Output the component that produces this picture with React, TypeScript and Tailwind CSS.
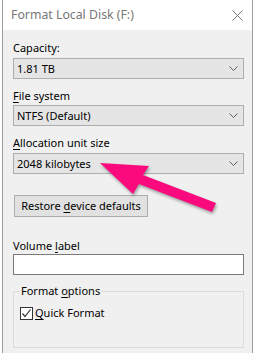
import React from "react";

const FONT = { fontFamily: '"Segoe UI", "Noto Sans", "Open Sans", sans-serif' };

function Chevron() {
  return (
    <svg width="9" height="5" viewBox="0 0 9 5" className="shrink-0">
      <path d="M0.5 0.5 L4.5 4.5 L8.5 0.5" fill="none" stroke="#606060" strokeWidth="1" />
    </svg>
  );
}

function Combo({ value }: { value: string }) {
  return (
    <div className="h-[21px] border border-[#adadad] bg-[#e5e5e5] flex items-center pl-[3px] pr-[5px]">
      <span className="flex-1 leading-4">{value}</span>
      <Chevron />
    </div>
  );
}

export default function App() {
  return (
    <div className="relative w-[254px] h-[353px] flex bg-white overflow-hidden text-[11px] text-black" style={FONT}>
      <div className="w-[2px] bg-white" />
      <div className="w-[251px] flex flex-col border-x border-[#9c9c9c]">
        {/* title bar */}
        <div className="h-[30px] bg-white flex items-center pl-[8px] pr-[9px]">
          <span className="flex-1 text-[#777777] text-[12.3px] leading-4">Format Local Disk (F:)</span>
          <svg width="11" height="11" viewBox="0 0 11 11">
            <path d="M0.5 0.5 L10.5 10.5 M10.5 0.5 L0.5 10.5" stroke="#7a7a7a" strokeWidth="1" />
          </svg>
        </div>

        <div className="flex-1 bg-[#f0f0f0] pl-[10px] pr-[8px] flex flex-col">
          <div className="mt-[10px] leading-4">Capacity:</div>
          <div className="mt-[2px]">
            <Combo value="1.81 TB" />
          </div>

          <div className="mt-[9px] leading-4">
            <span className="underline underline-offset-2">F</span>ile system
          </div>
          <div className="mt-[1px]">
            <Combo value="NTFS (Default)" />
          </div>

          <div className="mt-[9px] leading-4">
            <span className="underline underline-offset-2">A</span>llocation unit size
          </div>
          <div className="mt-[2px]">
            <Combo value="2048 kilobytes" />
          </div>

          <button className="mt-[21px] ml-px w-[134px] h-[22px] border border-[#adadad] bg-[#e1e1e1] leading-4 text-center">
            Restore <span className="underline underline-offset-2">d</span>evice defaults
          </button>

          <div className="mt-[21px] leading-4">
            Volume <span className="underline underline-offset-2">l</span>abel
          </div>
          <div className="h-[21px] border border-[#7a7a7a] bg-white" />

          <fieldset className="mt-[8px] h-[65px] border border-[#dcdcdc] pl-[6px]">
            <legend className="px-px leading-4">
              Format <span className="underline underline-offset-2">o</span>ptions
            </legend>
            <div className="mt-[6px] h-4 flex items-center gap-[2px]">
              <div className="w-[13px] h-[13px] border border-[#333333] bg-white flex items-center justify-center">
                <svg width="11" height="11" viewBox="0 0 11 11">
                  <path d="M1.5 5.5 L4 8.5 L9.5 1.5" fill="none" stroke="#333333" strokeWidth="1.2" />
                </svg>
              </div>
              <span className="leading-4">
                <span className="underline underline-offset-2">Q</span>uick Format
              </span>
            </div>
          </fieldset>
        </div>
      </div>
      <div className="w-px bg-white" />

      {/* annotation arrow */}
      <svg
        className="absolute inset-0 pointer-events-none"
        width="254"
        height="353"
        viewBox="0 0 254 353"
        style={{ filter: "drop-shadow(1px 2px 1.5px rgba(0,0,0,0.35))" }}
      >
        <polygon
          points="100,163 149,166 143,175 216,203 212,212 139,184 133,194"
          fill="#fb0a7e"
        />
      </svg>
    </div>
  );
}
